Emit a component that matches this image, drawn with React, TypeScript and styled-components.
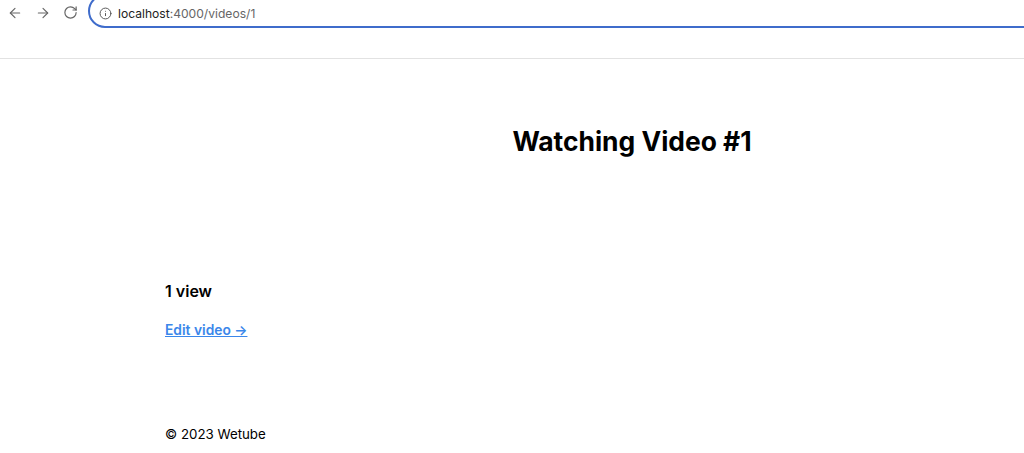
import { ArrowLeft, ArrowRight, RotateCw, Info } from 'lucide-react';
import styled, { createGlobalStyle } from 'styled-components';

const GlobalStyle = createGlobalStyle`
    html, body {
        margin: 0;
        padding: 0;
        background: #fff;
    }
    body {
        font-family: Inter, "Liberation Sans", sans-serif;
        color: #000;
    }
`;

const App = () => {
    return (
        <Page>
            <GlobalStyle />
            <BrowserBar>
                <NavIcons>
                    <ArrowLeft size={16} strokeWidth={1.7} />
                    <ArrowRight size={16} strokeWidth={1.7} />
                    <RotateCw size={15} strokeWidth={1.9} />
                </NavIcons>
                <AddressBar>
                    <Info size={13} strokeWidth={1.8} />
                    <Url>
                        <strong>localhost</strong>:4000/videos/1
                    </Url>
                </AddressBar>
            </BrowserBar>
            <Main>
                <Title>Watching Video #1</Title>
                <Views>1 view</Views>
                <EditLink href="#">Edit video →</EditLink>
            </Main>
            <Footer>© 2023 Wetube</Footer>
        </Page>
    );
};

const Page = styled.div`
    width: 1024px;
    height: 453px;
    overflow: hidden;
`;

const BrowserBar = styled.div`
    height: 58px;
    display: flex;
    align-items: flex-start;
    padding-left: 7px;
    border-bottom: 1px solid #e2e2e2;
    overflow: hidden;
`;

const NavIcons = styled.div`
    display: flex;
    align-items: center;
    gap: 12px;
    height: 25px;
    color: #666;
    margin-right: 10px;
`;

const AddressBar = styled.div`
    flex: 1;
    height: 34px;
    margin-top: -6px;
    margin-right: -20px;
    box-sizing: border-box;
    display: flex;
    align-items: center;
    gap: 6px;
    padding: 5px 0 0 9px;
    border: 2px solid #3f6ccb;
    border-radius: 17px;
    color: #555;
`;

const Url = styled.span`
    font-size: 12.1px;
    color: #666;

    strong {
        font-weight: 400;
        color: #222;
    }
`;

const Main = styled.main`
    padding: 67px 0 0 165px;
    height: 292px;
    box-sizing: border-box;
`;

const Title = styled.h1`
    margin: 0 0 125px;
    width: 934px;
    text-align: center;
    font-size: 26.4px;
    line-height: 30px;
    font-weight: 700;
`;

const Views = styled.h3`
    margin: 0 0 20px;
    font-size: 16px;
    line-height: 20px;
    font-weight: 600;
`;

const EditLink = styled.a`
    display: block;
    width: fit-content;
    font-size: 13.8px;
    line-height: 18px;
    font-weight: 600;
    color: #3b87ea;
    text-decoration: underline;
`;

const Footer = styled.footer`
    margin-top: 74px;
    padding-left: 165px;
    font-size: 13.3px;
    line-height: 18px;
`;

export default App;
